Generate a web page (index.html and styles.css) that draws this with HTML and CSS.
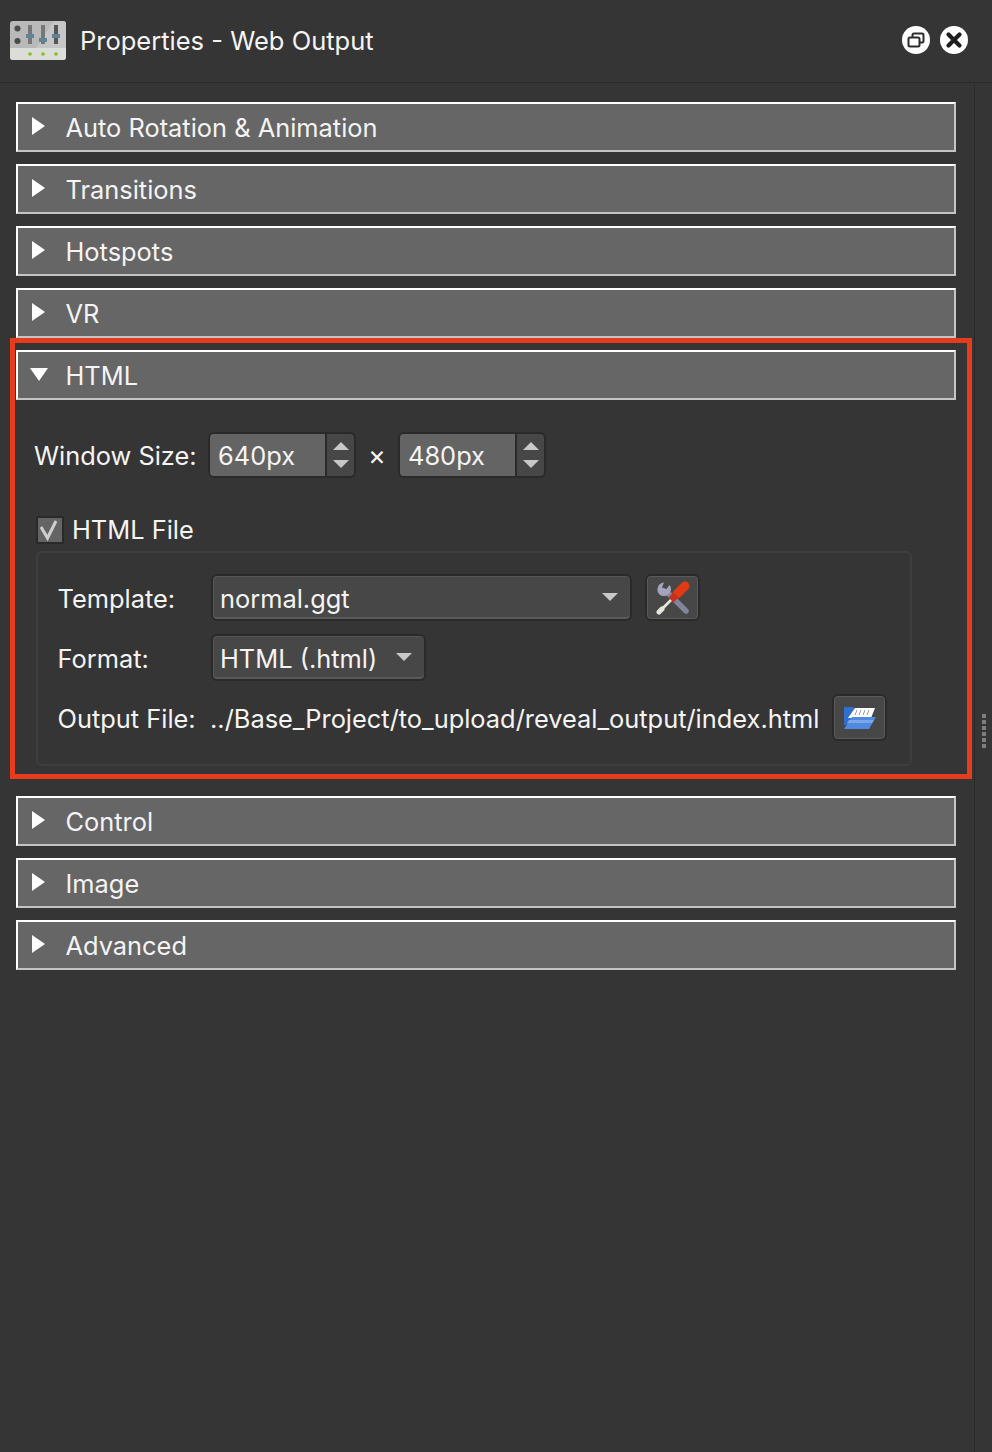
FILE: index.html
```html
<!DOCTYPE html>
<html lang="en">
<head>
<meta charset="utf-8">
<title>Properties - Web Output</title>
<link rel="stylesheet" href="styles.css">
</head>
<body>
<div class="window">
  <header class="titlebar">
    <svg class="app-icon" width="56" height="39" viewBox="0 0 56 39">
      <rect x="0" y="0" width="56" height="39" rx="3" fill="#b9b9b9"/>
      <path d="M44 0h9a3 3 0 0 1 3 3v24H26z" fill="#c6c6c6"/>
      <path d="M0 27h56v9a3 3 0 0 1-3 3H3a3 3 0 0 1-3-3z" fill="#dcdcd8"/>
      <circle cx="7.500" cy="7.500" r="3" fill="#4a4a4a"/><circle cx="7.500" cy="20" r="3" fill="#4a4a4a"/>
      <rect x="18" y="4" width="4" height="19" fill="#777"/><rect x="31" y="4" width="4" height="19" fill="#777"/><rect x="44" y="4" width="4" height="19" fill="#555"/>
      <rect x="16" y="13" width="8" height="4" fill="#5f8494"/><rect x="29" y="17" width="8" height="4" fill="#5f8494"/><rect x="42" y="13" width="8" height="4" fill="#5f8494"/>
      <circle cx="20" cy="33" r="1.800" fill="#7fc31f"/><circle cx="33" cy="33" r="1.800" fill="#7fc31f"/><circle cx="46" cy="33" r="1.800" fill="#7fc31f"/>
    </svg>
    <span class="title">Properties - Web Output</span>
    <span class="title-buttons">
      <svg width="28" height="28" viewBox="0 0 28 28"><circle cx="14" cy="14" r="14" fill="#fff"/><rect x="10.500" y="7.500" width="11" height="9" rx="1.500" fill="none" stroke="#2c2c2c" stroke-width="2"/><rect x="6.500" y="11.500" width="11" height="9" rx="1.500" fill="#fff" stroke="#2c2c2c" stroke-width="2"/></svg>
      <svg width="28" height="28" viewBox="0 0 28 28"><circle cx="14" cy="14" r="14" fill="#fff"/><path d="M8.500 8.500l11 11M19.500 8.500l-11 11" stroke="#1e1e1e" stroke-width="4.200" stroke-linecap="round"/></svg>
    </span>
  </header>

  <main class="panel">
    <div class="bar"><span class="tri"></span>Auto Rotation &amp; Animation</div>
    <div class="bar"><span class="tri"></span>Transitions</div>
    <div class="bar"><span class="tri"></span>Hotspots</div>
    <div class="bar"><span class="tri"></span>VR</div>
    <section class="open">
      <div class="highlight"></div>
      <div class="bar"><span class="tri down"></span>HTML</div>
      <div class="size-row">
        <span class="size-label">Window Size:</span>
        <span class="spin"><span class="spin-val">640px</span><span class="spin-btns"><i class="up"></i><i class="dn"></i></span></span>
        <span class="times">×</span>
        <span class="spin"><span class="spin-val">480px</span><span class="spin-btns"><i class="up"></i><i class="dn"></i></span></span>
      </div>
      <label class="check-row">
        <span class="check"><svg width="24" height="24" viewBox="0 0 24 24"><path d="M3 9l6.500 11L18 3" fill="none" stroke="#cfcfcf" stroke-width="3"/></svg></span>
        HTML File
      </label>
      <div class="group">
        <div class="row">
          <span class="lbl">Template:</span>
          <span class="combo wide">normal.ggt<i class="caret"></i></span>
          <span class="btn tools">
            <svg width="34" height="34" viewBox="0 0 34 34">
              <path d="M13 13L30 30" stroke="#83839c" stroke-width="5.500" stroke-linecap="round"/>
              <path d="M8 1.500a7.500 7.500 0 0 0-6.500 6c-.5 4 2 7 5.500 7.500 4 .5 8-2.500 8-7 0-1.500-.5-3-1.500-4L10.500 8 6 6.500z" fill="#a3a3bb"/>
              <path d="M3 31L15 19" stroke="#e6e6da" stroke-width="2.800" stroke-linecap="round"/>
              <path d="M3 31L6 28" stroke="#e6e6da" stroke-width="5" stroke-linecap="round"/>
              <path d="M21 13L29 5" stroke="#e23a14" stroke-width="9" stroke-linecap="round"/>
              <path d="M15 19l5-5" stroke="#c5301a" stroke-width="7"/>
            </svg>
          </span>
        </div>
        <div class="row">
          <span class="lbl">Format:</span>
          <span class="combo narrow">HTML (.html)<i class="caret"></i></span>
        </div>
        <div class="row last">
          <span class="lbl out">Output File:</span>
          <span class="path">../Base_Project/to_upload/reveal_output/index.html</span>
          <span class="btn folder">
            <svg width="34" height="26" viewBox="0 0 34 26">
              <path d="M1 2h9l2 2h4v16H1z" fill="#2f6fce"/>
              <path d="M5 13L12 3h20l-4 10z" fill="#fff"/>
              <path d="M14 5l-2 5M18 5l-2 5M22 5l-2 5M26 5l-2 5" stroke="#9a9a9a" stroke-width="1"/>
              <path d="M9 12h24l-7 12H1z" fill="#4f8ae0"/>
              <path d="M6 15h25l-2 3H4z" fill="#7ba6e8"/>
            </svg>
          </span>
        </div>
      </div>
    </section>
    <div class="bar"><span class="tri"></span>Control</div>
    <div class="bar"><span class="tri"></span>Image</div>
    <div class="bar"><span class="tri"></span>Advanced</div>
  </main>

  <div class="grip"><i></i><i></i><i></i><i></i><i></i><i></i></div>
</div>
</body>
</html>
```
FILE: styles.css
```css
* { box-sizing: border-box; }
html, body { margin: 0; height: 100%; background: #353535; }
body { font-family: Inter, "Noto Sans", sans-serif; font-size: 25.400px; color: #f4f4f4; overflow: hidden; }
.window { position: relative; width: 992px; height: 1452px; overflow: hidden; }

.titlebar { display: flex; align-items: center; height: 83px; padding: 0 24px 2px 10px; border-bottom: 1px solid #2a2a2a; }
.app-icon { flex: none; }
.title { margin-left: 14px; flex: 1; font-size: 25.500px; }
.title-buttons { display: flex; gap: 10px; }

.panel { width: 975px; height: 1369px; padding: 19px 18px 0 16px; border-right: 1px solid #2b2b2b; display: flex; flex-direction: column; gap: 12px; }

.bar { display: flex; align-items: center; height: 50px; padding: 2px 0 0 47.500px; position: relative; background: #666; border: 2px solid #fff; border-right-color: #c4c4c4; border-bottom-color: #c4c4c4; line-height: 1; }
.tri { position: absolute; left: 14px; top: 13px; width: 0; height: 0; border-left: 13px solid #fff; border-top: 9px solid transparent; border-bottom: 9px solid transparent; }
.tri.down { left: 12px; top: 16px; border-top: 13px solid #fff; border-bottom: 0; border-left: 9px solid transparent; border-right: 9px solid transparent; }

.open { position: relative; height: 416px; margin-bottom: 18px; }
.highlight { position: absolute; left: -6px; top: -12px; width: 962px; height: 441px; border: 5px solid #e63c1b; pointer-events: none; }

.size-row { display: flex; align-items: center; height: 46px; margin-top: 32px; padding-left: 18px; }
.size-label { width: 174px; flex: none; }
.spin { display: flex; flex: none; width: 148px; height: 46px; border: 2px solid #2a2a2a; border-radius: 6px; background: #474747; overflow: hidden; }
.spin-val { width: 117px; padding: 0 0 0 8px; display: flex; align-items: center; background: #646464; border-right: 2px solid #2a2a2a; }
.spin-btns { flex: 1; display: flex; flex-direction: column; align-items: center; justify-content: center; gap: 10px; }
.up { width: 0; height: 0; border: 8px solid transparent; border-top: 0; border-bottom: 8px solid #c8c8c8; }
.dn { width: 0; height: 0; border: 8px solid transparent; border-bottom: 0; border-top: 8px solid #c8c8c8; }
.times { width: 42px; text-align: center; font-size: 27px; }

.check-row { display: flex; align-items: center; height: 30px; margin-top: 36px; padding: 1px 0 0 20px; gap: 8px; }
.check { width: 28px; height: 28px; display: flex; align-items: center; justify-content: center; background: #646464; border: 2px solid #2a2a2a; }

.group { width: 876px; height: 215px; margin: 7px 0 0 20px; padding: 21px 0 0 19.500px; border: 2px solid #3e3e3e; border-radius: 6px; display: flex; flex-direction: column; gap: 13px; }
.row { display: flex; align-items: center; height: 47px; }
.lbl { width: 153.500px; flex: none; padding-top: 1px; }
.lbl.out { width: 152.500px; }
.combo { position: relative; height: 47px; display: flex; align-items: center; padding: 1px 0 0 7px; background: #474747; border: 2px solid #2a2a2a; border-radius: 6px; box-shadow: inset 0 -2px 0 #5a5a5a, inset 1px 1px 0 #555; }
.combo.wide { width: 421px; }
.combo.narrow { width: 215px; }
.caret { position: absolute; right: 12px; top: 17px; width: 0; height: 0; border-left: 8px solid transparent; border-right: 8px solid transparent; border-top: 8px solid #c8c8c8; }
.btn { display: flex; align-items: center; justify-content: center; flex: none; width: 55px; height: 47px; background: #474747; border: 2px solid #2a2a2a; border-radius: 6px; box-shadow: inset 0 0 0 1px #5a5a5a; }
.tools { margin-left: 13px; }
.path { width: 622px; flex: none; white-space: nowrap; padding-top: 1px; }

.grip { position: absolute; left: 982px; top: 714px; display: flex; flex-direction: column; gap: 2px; }
.grip i { display: block; width: 4px; height: 4px; background: #7e7e7e; }
```
